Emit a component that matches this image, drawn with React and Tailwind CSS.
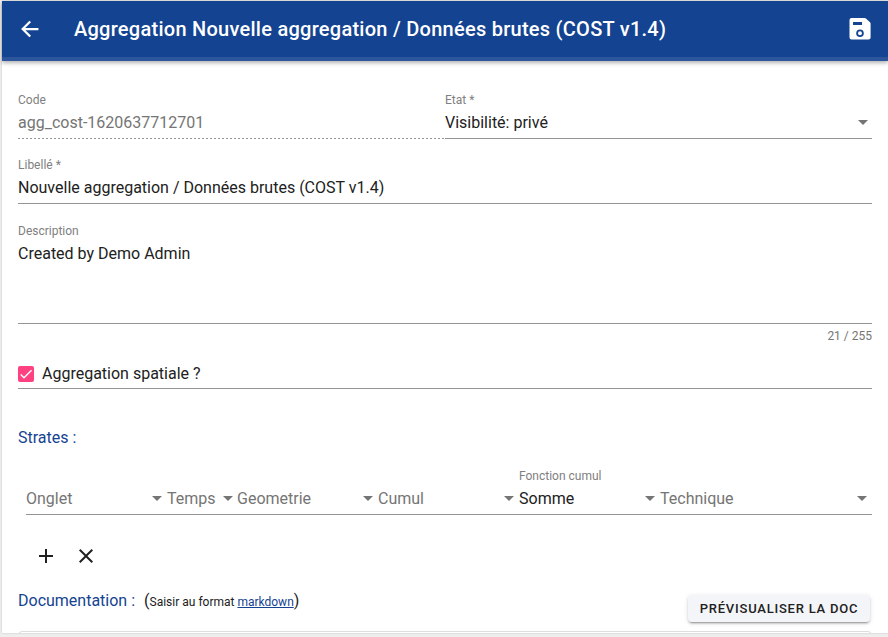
import React from "react";

function Caret({ className = "" }) {
  return (
    <span
      className={`h-0 w-0 shrink-0 border-x-[5px] border-t-[5px] border-x-transparent border-t-[#757575] ${className}`}
    />
  );
}

function Field({ label, children, className = "", line = "bg-[#949494]" }) {
  return (
    <div className={`flex shrink-0 flex-col ${className}`}>
      <div className="h-4 text-xs leading-4 text-[#808080]">{label}</div>
      <div className="mt-[5px] flex h-5 flex-1 items-start text-base leading-5">{children}</div>
      <div className={`mt-[5px] h-px shrink-0 ${line}`} />
    </div>
  );
}

const columns = [
  { name: "Onglet", width: "w-[141px]", caret: "mr-[5px]" },
  { name: "Temps", width: "w-[70px]", caret: "mr-1" },
  { name: "Geometrie", width: "w-[141px]", caret: "mr-[5px]" },
  { name: "Cumul", width: "w-[141px]", caret: "mr-[5px]" },
  { name: "Somme", label: "Fonction cumul", width: "w-[141px]", caret: "mr-[5px]" },
  { name: "Technique", width: "w-[212px]", caret: "mr-[5px]" },
];

export default function App() {
  return (
    <div className="h-[637px] w-[888px] overflow-hidden bg-[#eeeeee] pl-0.5 pt-px font-[Roboto,sans-serif] text-base text-[#212121]">
      <div className="flex h-[632px] flex-col bg-white shadow-[0_0_2px_rgba(0,0,0,0.18)]">
        <header className="z-10 flex h-[60px] shrink-0 items-center border-b-4 border-[#2c559c] bg-[#144391] px-4 text-white shadow-[0_2px_4px_rgba(0,0,0,0.3)]">
          <svg className="h-6 w-6" viewBox="0 0 512 512" fill="none" stroke="currentColor" strokeWidth="48" strokeLinecap="square" strokeMiterlimit="10">
            <path d="M244 400 100 256l144-144M120 256h292" />
          </svg>
          <h1 className="ml-8 flex-1 whitespace-nowrap text-xl font-medium leading-6 tracking-[0.262px]">
            Aggregation Nouvelle aggregation / Données brutes (COST v1.4)
          </h1>
          <svg className="h-6 w-6" viewBox="0 0 24 24">
            <path fill="currentColor" fillRule="evenodd" d="M3.500 1H16.500a2.500 2.500 0 0 1 1.700.700l3.800 3.500a2 2 0 0 1 .600 1.500V20.500a2 2 0 0 1-2 2H3.500a2 2 0 0 1-2-2V3a2 2 0 0 1 2-2ZM5 5v3h9V5Zm7 7.500a3.800 3.800 0 1 0 0 7.600a3.800 3.800 0 1 0 0-7.600Zm0 1.800a2 2 0 1 1 0 4a2 2 0 1 1 0-4Z" />
          </svg>
        </header>

        <main className="flex flex-1 flex-col overflow-hidden px-4 pt-[31px]">
          <div className="flex h-[47px] shrink-0">
            <Field
              label="Code"
              className="w-[427px]"
              line="bg-[repeating-linear-gradient(to_right,#949494_0_2px,transparent_2px_4px)]"
            >
              <span className="text-[#757575]">agg_cost-1620637712701</span>
            </Field>
            <Field label="Etat *" className="w-[427px]">
              <span className="flex-1">Visibilité: privé</span>
              <Caret className="mr-1 mt-[7px]" />
            </Field>
          </div>

          <Field label="Libellé *" className="mt-[18px] h-[47px] w-[854px]">
            Nouvelle aggregation / Données brutes (COST v1.4)
          </Field>
          <Field label="Description" className="mt-[19px] h-[101px] w-[854px]">
            Created by Demo Admin
          </Field>
          <div className="mt-1 h-4 w-[854px] shrink-0 text-right text-xs leading-4 text-[#757575]">21 / 255</div>

          <div className="mt-[19px] flex h-[26px] w-[854px] shrink-0 items-start border-b border-[#949494] leading-5">
            <span className="mt-[3px] flex h-4 w-4 items-center justify-center rounded-[2px] bg-[#ff4081]">
              <svg className="h-4 w-4" viewBox="0 0 24 24" fill="none" stroke="white" strokeWidth="2.130">
                <path d="M4.100 12.700 9 17.600 20.300 6.300" />
              </svg>
            </span>
            <span className="ml-2 mt-px">Aggregation spatiale ?</span>
          </div>

          <h2 className="mt-[39px] shrink-0 text-base leading-5 text-[#144391]">Strates :</h2>

          <div className="ml-2 mt-5 flex h-[47px] w-[846px] shrink-0">
            {columns.map((column) => (
              <Field key={column.name} label={column.label} className={column.width}>
                <span className={`flex-1 ${column.label ? "" : "text-[#757575]"}`}>{column.name}</span>
                <Caret className={`mt-[7px] ${column.caret}`} />
              </Field>
            ))}
          </div>

          <div className="mt-[29px] flex h-6 shrink-0 gap-4 pl-4">
            <svg className="h-6 w-6" viewBox="0 0 24 24" fill="currentColor">
              <path d="M19 13h-6v6h-2v-6H5v-2h6V5h2v6h6z" />
            </svg>
            <svg className="h-6 w-6" viewBox="0 0 24 24" fill="currentColor">
              <path d="M19 6.410 17.590 5 12 10.590 6.410 5 5 6.410 10.590 12 5 17.590 6.410 19 12 13.410 17.590 19 19 17.590 13.410 12z" />
            </svg>
          </div>

          <div className="mt-[23px] flex h-9 w-[854px] shrink-0 items-start justify-between">
            <div className="flex whitespace-nowrap leading-5">
              <span className="text-[#144391]">Documentation :</span>
              <span className="ml-[9px]">
                (<span className="text-xs">Saisir au format <a className="text-[#144391] underline">markdown</a></span>)
              </span>
            </div>
            <button className="mr-0.5 mt-1 h-[27px] w-[182px] whitespace-nowrap rounded bg-[#f4f5f8] text-[13px] font-medium tracking-[0.78px] shadow-[0_3px_1px_-2px_rgba(0,0,0,0.2),0_2px_2px_rgba(0,0,0,0.14),0_1px_5px_rgba(0,0,0,0.12)]">
              PRÉVISUALISER LA DOC
            </button>
          </div>
          <div className="mt-1 h-6 w-[854px] shrink-0 rounded border border-[#dddddd]" />
        </main>
      </div>
    </div>
  );
}
